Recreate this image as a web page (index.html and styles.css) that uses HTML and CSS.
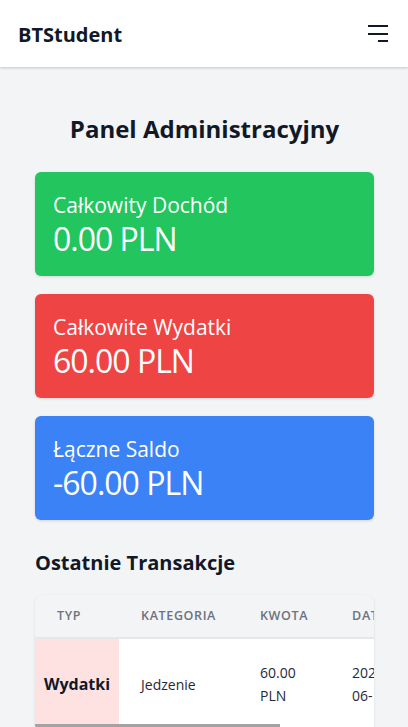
FILE: index.html
```html
<!DOCTYPE html>
<html lang="pl">
<head>
<meta charset="utf-8">
<title>BTStudent</title>
<link rel="stylesheet" href="styles.css">
</head>
<body>
<header class="topbar">
  <div class="logo">BTStudent</div>
  <button class="menu-btn" aria-label="Menu">
    <svg width="24" height="24" viewBox="0 0 24 24" fill="none" stroke="#111827" stroke-width="2" stroke-linecap="butt">
      <line x1="2" y1="7" x2="22" y2="7"/>
      <line x1="2" y1="15" x2="22" y2="15"/>
      <line x1="12" y1="22" x2="22" y2="22"/>
    </svg>
  </button>
</header>
<main class="main">
  <h1 class="page-title">Panel Administracyjny</h1>
  <section class="stats">
    <div class="stat stat-green">
      <div class="stat-label">Całkowity Dochód</div>
      <div class="stat-value">0.00 PLN</div>
    </div>
    <div class="stat stat-red">
      <div class="stat-label">Całkowite Wydatki</div>
      <div class="stat-value">60.00 PLN</div>
    </div>
    <div class="stat stat-blue">
      <div class="stat-label">Łączne Saldo</div>
      <div class="stat-value">-60.00 PLN</div>
    </div>
  </section>
  <h2 class="section-title">Ostatnie Transakcje</h2>
  <div class="table-wrap">
    <table class="tx-table">
      <thead>
        <tr>
          <th>Typ</th>
          <th>Kategoria</th>
          <th>Kwota</th>
          <th>Data</th>
          <th>Opis</th>
        </tr>
      </thead>
      <tbody>
        <tr>
          <td class="type-cell expense">Wydatki</td>
          <td>Jedzenie</td>
          <td>60.00 PLN</td>
          <td>2025-<wbr>06-10</td>
          <td class="desc">Obiad</td>
        </tr>
      </tbody>
    </table>
    <div class="scroll-thumb"></div>
  </div>
</main>
</body>
</html>
```

FILE: styles.css
```css
* { box-sizing: border-box; }
html, body { margin: 0; padding: 0; }
body {
  background: #f3f4f6;
  font-family: "Open Sans", "Noto Sans", sans-serif;
  color: #111827;
}
.topbar {
  height: 67px;
  background: #ffffff;
  display: flex;
  align-items: center;
  justify-content: space-between;
  padding: 0 18px;
  box-shadow: 0 1px 3px rgba(0,0,0,0.12), 0 1px 2px rgba(0,0,0,0.08);
  position: relative;
}
.logo {
  font-size: 20px;
  font-weight: 700;
  color: #111827;
  padding-top: 2px;
}
.menu-btn {
  border: 0;
  background: transparent;
  padding: 0;
  width: 24px;
  height: 24px;
  display: flex;
  margin-top: -6px;
}
.main {
  padding: 0 34px 0 35px;
}
.page-title {
  margin: 46px 0 27px;
  text-align: center;
  font-size: 24px;
  line-height: 32px;
  font-weight: 700;
}
.stats {
  display: flex;
  flex-direction: column;
  gap: 18px;
}
.stat {
  border-radius: 6px;
  padding: 19px 18px 17px;
  color: #ffffff;
  box-shadow: 0 1px 3px rgba(0,0,0,0.12);
  height: 104px;
}
.stat-green { background: #22c55e; }
.stat-red { background: #ef4444; }
.stat-blue { background: #3b82f6; }
.stat-label {
  font-size: 21px;
  line-height: 28px;
}
.stat-value {
  font-size: 32px;
  line-height: 40px;
  letter-spacing: -1px;
}
.section-title {
  margin: 29px 0 18px;
  font-size: 20px;
  line-height: 28px;
  font-weight: 700;
}
.table-wrap {
  background: #ffffff;
  border-radius: 8px;
  box-shadow: 0 1px 3px rgba(0,0,0,0.1);
  overflow-x: auto;
  scrollbar-width: none;
}
.table-wrap::-webkit-scrollbar { display: none; }
.scroll-thumb {
  width: 245px;
  height: 8px;
  background: #a3a3a3;
}
.tx-table {
  border-collapse: collapse;
  width: 100%;
}
.tx-table th {
  background: #f3f4f6;
  color: #6b7280;
  font-size: 12.5px;
  line-height: 16px;
  font-weight: 600;
  letter-spacing: 0.05em;
  text-transform: uppercase;
  text-align: left;
  padding: 13px 22px;
  border-bottom: 2px solid #e5e7eb;
}
.tx-table td {
  font-size: 14px;
  line-height: 23px;
  padding: 22px 22px 17px;
  color: #1f2937;
  vertical-align: middle;
}
.tx-table td.type-cell {
  padding: 22px 9px 17px;
  font-size: 16px;
  font-weight: 700;
  text-align: center;
  color: #111827;
}
.expense { background: #fee2e2; }
.tx-table td.desc { min-width: 50px; }
```
